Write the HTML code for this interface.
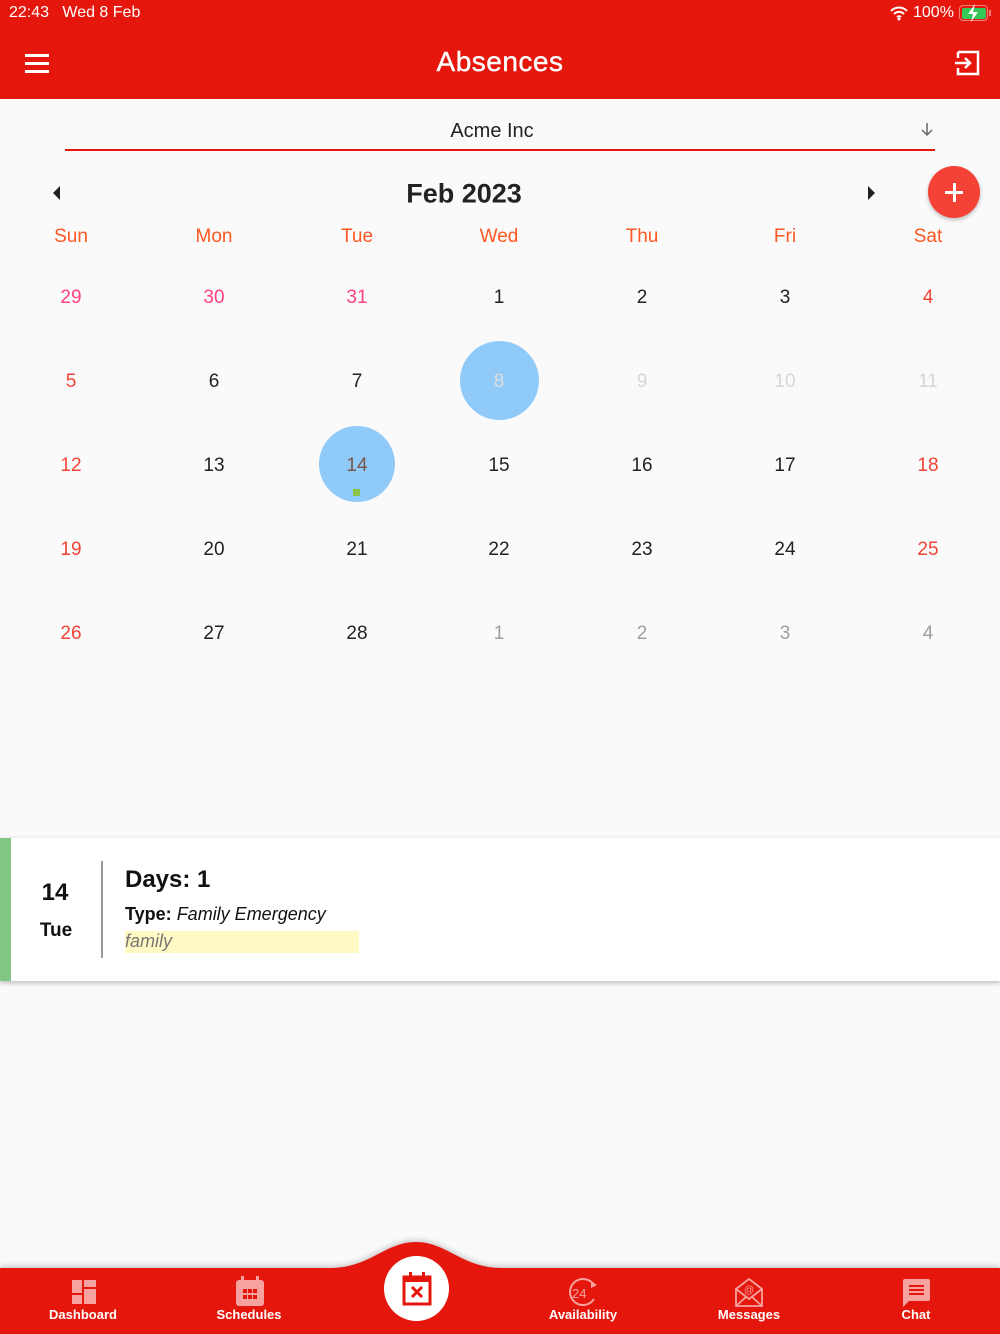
<!DOCTYPE html>
<html><head><meta charset="utf-8">
<style>
*{margin:0;padding:0;box-sizing:border-box}
body{width:1000px;height:1334px;background:#fafafa;font-family:"Liberation Sans",sans-serif;position:relative;overflow:hidden}
.a{position:absolute}
.hdr{left:0;top:0;width:1000px;height:99px;background:#e5170d}
.c{position:absolute;transform:translate(-50%,-50%);font-size:19px;white-space:nowrap}
.tab{position:absolute;top:1307px;transform:translateX(-50%);color:#fff;font-size:13px;font-weight:bold}
</style></head><body>
<div class="a hdr"></div>
<div class="a" style="left:9px;top:4px;color:#fff;font-size:16px">22:43&nbsp;&nbsp;&nbsp;Wed 8 Feb</div>
<svg class="a" style="left:889px;top:6px" width="20" height="15" viewBox="0 0 20 15"><path d="M2 5a11 11 0 0 1 16 0M5 8a7 7 0 0 1 10 0M8 11a3 3 0 0 1 4 0" stroke="#fff" stroke-width="2" fill="none"/><circle cx="10" cy="13" r="1.5" fill="#fff"/></svg>
<div class="a" style="left:913px;top:4px;color:#fff;font-size:16px">100%</div>
<div class="a" style="left:959px;top:5px;width:29px;height:16px;border:1.5px solid #f08080;border-radius:4px;padding:1.5px"><div style="width:100%;height:100%;background:#34c759;border-radius:2px"></div></div>
<div class="a" style="left:989px;top:10px;width:2px;height:6px;background:#f08080"></div>
<svg class="a" style="left:966px;top:4px" width="14" height="18" viewBox="0 0 14 18"><path d="M9 0L2 10h5l-2 8 7-10H7z" fill="#fff"/></svg>
<div class="a" style="left:25px;top:54px;width:24px;height:3px;background:#fff;box-shadow:0 8px 0 #fff,0 16px 0 #fff"></div>
<div class="a" style="left:0;width:1000px;top:46px;text-align:center;color:#fff;font-size:28px;letter-spacing:0.5px;-webkit-text-stroke:0.4px #fff">Absences</div>
<svg class="a" style="left:955px;top:49px" width="27" height="28" viewBox="0 0 27 28"><path d="M3 3h20v22H3v-6M3 3v6" stroke="#fff" stroke-width="2.5" fill="none"/><path d="M0 14h15M10 9l5 5-5 5" stroke="#fff" stroke-width="2.5" fill="none"/></svg>

<div class="a" style="left:0;width:984px;top:120px;text-align:center;font-size:20px;color:#222">Acme Inc</div>
<svg class="a" style="left:921px;top:123px" width="12" height="14"><path d="M6 0v12M1 7l5 5 5-5" stroke="#666" stroke-width="1.5" fill="none"/></svg>
<div class="a" style="left:65px;top:149px;width:870px;height:2px;background:#e5170d"></div>

<svg class="a" style="left:53px;top:186px" width="8" height="14"><path d="M7 0L0 7l7 7z" fill="#222"/></svg>
<svg class="a" style="left:868px;top:186px" width="8" height="14"><path d="M0 0l7 7-7 7z" fill="#222"/></svg>
<div class="c" style="left:464px;top:194px;font-size:27px;font-weight:bold;color:#222">Feb 2023</div>
<div class="a" style="left:928px;top:166px;width:52px;height:52px;border-radius:50%;background:#f44336;box-shadow:0 2px 4px rgba(0,0,0,.25)"></div>
<div class="a" style="left:945px;top:191px;width:18px;height:3px;background:#fff"></div>
<div class="a" style="left:952.5px;top:183px;width:3px;height:19px;background:#fff"></div>

<div class="a" style="left:460px;top:341px;width:79px;height:79px;border-radius:50%;background:#90caf9"></div>
<div class="a" style="left:319px;top:426px;width:76px;height:76px;border-radius:50%;background:#90caf9"></div>
<div class="a" style="left:353px;top:489px;width:7px;height:7px;background:#8bc34a"></div>

<div id="cal"></div>
<script>
var xs=[71,214,357,499,642,785,928],h=["Sun","Mon","Tue","Wed","Thu","Fri","Sat"],o="";
h.forEach(function(t,i){o+='<div class="c" style="left:'+xs[i]+'px;top:237px;color:#ff5722">'+t+'</div>'});
var rows=[["29","30","31","1","2","3","4"],["5","6","7","8","9","10","11"],["12","13","14","15","16","17","18"],["19","20","21","22","23","24","25"],["26","27","28","1","2","3","4"]];
rows.forEach(function(r,ri){r.forEach(function(t,i){var col="#222";
if(i==0||i==6)col="#f44336";
if(ri==0&&i<3)col="#ff4081";
if(ri==1&&i>=4)col="#d6d6d6";
if(ri==1&&i==3)col="#dcdcdc";
if(ri==2&&i==2)col="#795548";
if(ri==4&&i>=3)col="#9e9e9e";
o+='<div class="c" style="left:'+xs[i]+'px;top:'+(298+ri*84)+'px;color:'+col+'">'+t+'</div>'})});
document.getElementById("cal").innerHTML=o;
</script>

<div class="a" style="left:0;top:838px;width:1000px;height:143px;background:#fff;box-shadow:0 2px 5px rgba(0,0,0,.25)"></div>
<div class="a" style="left:0;top:838px;width:11px;height:143px;background:#81c784"></div>
<div class="c" style="left:55px;top:893px;font-size:24px;font-weight:bold;color:#111">14</div>
<div class="c" style="left:56px;top:931px;font-size:19px;font-weight:bold;color:#111">Tue</div>
<div class="a" style="left:101px;top:861px;width:2px;height:97px;background:#999"></div>
<div class="a" style="left:125px;top:866px;font-size:24px;font-weight:bold;color:#111">Days: 1</div>
<div class="a" style="left:125px;top:904px;font-size:18px;color:#111"><b>Type:</b> <i>Family Emergency</i></div>
<div class="a" style="left:125px;top:931px;width:234px;height:22px;background:#fff9c4"></div>
<div class="a" style="left:125px;top:931px;font-size:18px;font-style:italic;color:#777">family</div>

<svg class="a" style="left:0;top:1230px;filter:drop-shadow(0 -2px 3px rgba(0,0,0,.2))" width="1000" height="104" viewBox="0 0 1000 104"><path d="M0 38H330C370 38 385 12 416 12S462 38 502 38H1000V104H0z" fill="#e5170d"/></svg>
<div class="a" style="left:384px;top:1256px;width:65px;height:65px;border-radius:50%;background:#fff"></div>
<svg class="a" style="left:402px;top:1272px" width="30" height="34" viewBox="0 0 30 34"><rect x="2" y="5" width="26" height="27" fill="none" stroke="#e5170d" stroke-width="3"/><rect x="2" y="5" width="26" height="5" fill="#e5170d"/><rect x="7" y="0" width="3" height="7" fill="#e5170d"/><rect x="20" y="0" width="3" height="7" fill="#e5170d"/><path d="M10 15l10 10M20 15l-10 10" stroke="#e5170d" stroke-width="3"/></svg>

<svg class="a" style="left:72px;top:1280px" width="24" height="24"><g fill="#f6a3a0"><rect x="0" y="0" width="10" height="13"/><rect x="12" y="0" width="12" height="7"/><rect x="0" y="15" width="10" height="9"/><rect x="12" y="9" width="12" height="15"/></g></svg>
<svg class="a" style="left:236px;top:1276px" width="28" height="30"><g fill="#f6a3a0"><rect x="0" y="4" width="28" height="26" rx="3"/><rect x="5" y="0" width="3" height="6"/><rect x="20" y="0" width="3" height="6"/></g><g fill="#e5170d"><rect x="7" y="13" width="4" height="4"/><rect x="12" y="13" width="4" height="4"/><rect x="17" y="13" width="4" height="4"/><rect x="7" y="19" width="4" height="4"/><rect x="12" y="19" width="4" height="4"/><rect x="17" y="19" width="4" height="4"/></g></svg>
<svg class="a" style="left:566px;top:1277px" width="34" height="30"><path d="M28 8A13 13 0 1 0 28 22" stroke="#f6a3a0" stroke-width="2" fill="none"/><path d="M25 4l6 4-6 3z" fill="#f6a3a0"/><text x="6" y="21" font-size="13" fill="#f6a3a0" font-family="Liberation Sans">24</text></svg>
<svg class="a" style="left:734px;top:1277px" width="30" height="30"><path d="M2 12L15 2l13 10v17H2z M2 12l13 10 13-10 M2 29l10-9 M28 29l-10-9" stroke="#f6a3a0" stroke-width="1.8" fill="none"/><text x="10" y="16" font-size="10" fill="#f6a3a0" font-family="Liberation Sans">@</text></svg>
<svg class="a" style="left:903px;top:1279px" width="27" height="28"><path d="M0 2a2 2 0 0 1 2-2h23a2 2 0 0 1 2 2v18a2 2 0 0 1-2 2H6l-6 6z" fill="#f6a3a0"/><g fill="#e5170d"><rect x="6" y="6" width="15" height="2"/><rect x="6" y="10" width="15" height="2"/><rect x="6" y="14" width="15" height="2"/></g></svg>

<div class="tab" style="left:83px">Dashboard</div>
<div class="tab" style="left:249px">Schedules</div>
<div class="tab" style="left:583px">Availability</div>
<div class="tab" style="left:749px">Messages</div>
<div class="tab" style="left:916px">Chat</div>
</body></html>
